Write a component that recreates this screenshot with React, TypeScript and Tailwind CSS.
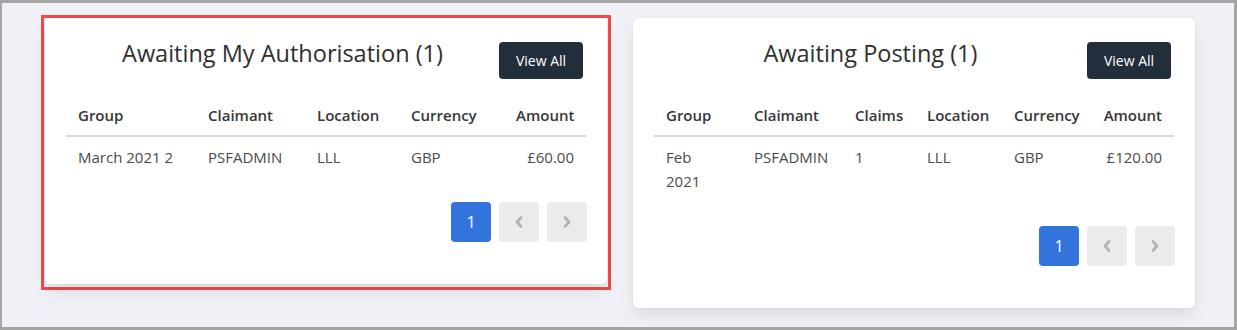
import React from "react";

const Chevron = ({ dir }: { dir: "left" | "right" }) => (
  <svg width="10" height="14" viewBox="0 0 10 14" fill="none">
    <path
      d={dir === "left" ? "M7 2.5 L3 7 L7 11.5" : "M3 2.5 L7 7 L3 11.5"}
      stroke="#b3b3b3"
      strokeWidth="2.8"
      strokeLinecap="round"
      strokeLinejoin="round"
    />
  </svg>
);

type Col = { label: string; w: number; right?: boolean };

function Card({
  title,
  cols,
  row,
}: {
  title: string;
  cols: Col[];
  row: React.ReactNode[];
}) {
  return (
    <div className="w-[562px] bg-white rounded-[6px] shadow-[0_8px_16px_-2px_rgba(10,10,10,0.1),0_0_0_1px_rgba(10,10,10,0.02)] pt-[21px] px-[21px] pb-[42px]">
      <div className="flex items-start pr-[3px]">
        <h2 className="flex-1 text-center text-[23.5px] leading-[29px] text-[#2f2f2f] font-medium">
          {title}
        </h2>
        <button className="mt-[3px] w-[84px] h-[37px] rounded-[4px] bg-[#222e3c] text-white text-[14px] leading-none">
          View All
        </button>
      </div>
      <table className="mt-[16px] w-[520px] table-fixed border-collapse text-[15px] leading-6">
        <colgroup>
          {cols.map((c, i) => (
            <col key={i} style={{ width: c.w }} />
          ))}
        </colgroup>
        <thead>
          <tr className="border-b-2 border-[#dbdbdb]">
            {cols.map((c, i) => (
              <th
                key={i}
                className={`px-3 py-2 font-semibold text-[#363636] ${c.right ? "text-right" : "text-left"}`}
              >
                {c.label}
              </th>
            ))}
          </tr>
        </thead>
        <tbody>
          <tr>
            {row.map((v, i) => (
              <td
                key={i}
                className={`px-3 py-2 align-top text-[#4a4a4a] ${cols[i].right ? "text-right" : "text-left"}`}
              >
                {v}
              </td>
            ))}
          </tr>
        </tbody>
      </table>
      <div className="mt-[25px] flex justify-end gap-2 -mr-px">
        <div className="w-10 h-10 rounded-[4px] bg-[#3273dc] text-white flex items-center justify-center text-[16px]">
          1
        </div>
        <div className="w-10 h-10 rounded-[4px] bg-[#ebebeb] flex items-center justify-center">
          <Chevron dir="left" />
        </div>
        <div className="w-10 h-10 rounded-[4px] bg-[#ebebeb] flex items-center justify-center">
          <Chevron dir="right" />
        </div>
      </div>
    </div>
  );
}

export default function App() {
  return (
    <div
      className="w-[1237px] h-[330px] bg-[#f0f1f6] border-t-[3px] border-l-2 border-r-[3px] border-b-[3px] border-[#a5a5a5] overflow-hidden"
      style={{ fontFamily: '"Open Sans", "Noto Sans", sans-serif' }}
    >
      <div className="flex items-start pl-[39px] pt-[12px] gap-[22px]">
        <div className="border-[3px] border-[#f04a4a] pl-px pr-px pb-[3px]">
          <Card
            title="Awaiting My Authorisation (1)"
            cols={[
              { label: "Group", w: 130 },
              { label: "Claimant", w: 109 },
              { label: "Location", w: 94 },
              { label: "Currency", w: 105 },
              { label: "Amount", w: 82, right: true },
            ]}
            row={["March 2021 2", "PSFADMIN", "LLL", "GBP", "£60.00"]}
          />
        </div>
        <div className="mt-[3px]">
          <Card
            title="Awaiting Posting (1)"
            cols={[
              { label: "Group", w: 88 },
              { label: "Claimant", w: 101 },
              { label: "Claims", w: 72 },
              { label: "Location", w: 87 },
              { label: "Currency", w: 88 },
              { label: "Amount", w: 84, right: true },
            ]}
            row={[
              <>
                Feb
                <br />
                2021
              </>,
              "PSFADMIN",
              "1",
              "LLL",
              "GBP",
              "£120.00",
            ]}
          />
        </div>
      </div>
    </div>
  );
}
